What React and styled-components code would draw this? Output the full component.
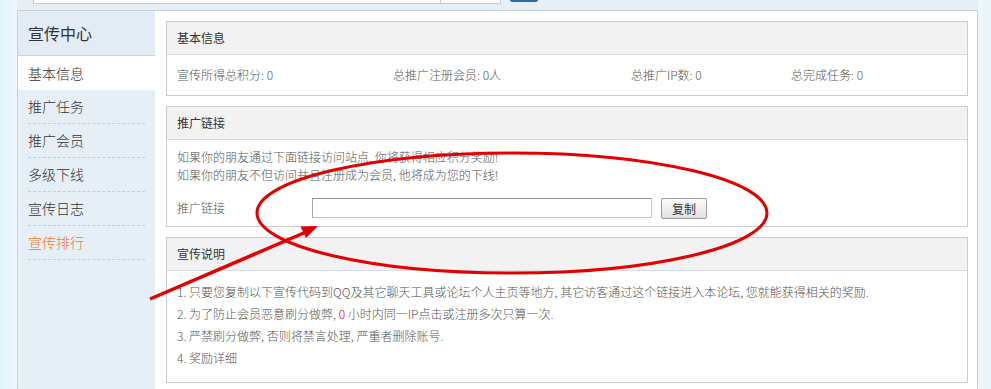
import styled, { createGlobalStyle } from "styled-components";

const GlobalStyle = createGlobalStyle`
  body {
    margin: 0;
    background: #e6f4fa;
    font-family: "Noto Sans CJK SC", "Noto Sans", sans-serif;
  }
`;

const Page = styled.div`
  position: relative;
  width: 991px;
  height: 389px;
  overflow: hidden;
  background: linear-gradient(90deg, #dff3fb 0px, #eef7fb 17px, #eef7fb 977px, #eaf5fa 991px);
  padding-left: 17px;
  box-sizing: border-box;
`;

const Frame = styled.div`
  width: 961px;
  height: 100%;
  background: #e7eef4;
  display: flex;
  flex-direction: column;
`;

const TopBar = styled.div`
  height: 10px;
  display: flex;
  align-items: flex-start;
  padding-left: 16px;
`;

const SearchBox = styled.div`
  width: 406px;
  height: 3px;
  background: #fff;
  border: 1px solid #c5ccd3;
  border-top: none;
`;

const SelectBox = styled.div`
  width: 59px;
  height: 3px;
  background: #fff;
  border: 1px solid #c5ccd3;
  border-top: none;
  border-left: none;
`;

const SearchButton = styled.div`
  width: 28px;
  height: 2px;
  margin-left: 9px;
  background: #2b6aa8;
  border-radius: 0 0 3px 3px;
`;

const Main = styled.div`
  flex: 1;
  display: flex;
  background: #fff;
  border: 1px solid #c8d0d8;
  border-bottom: none;
`;

const Sidebar = styled.div`
  width: 137px;
  background: #e6eef6;
  display: flex;
  flex-direction: column;
`;

const SideTitle = styled.div`
  height: 44px;
  line-height: 44px;
  padding-left: 10px;
  font-size: 16px;
  font-weight: 400;
  color: #333;
  background: #e3ebf4;
  border-bottom: 1px solid #cbd4dd;
`;

const NavItem = styled.div`
  height: ${(p) => (p.$active ? "34px" : "33px")};
  line-height: ${(p) => (p.$active ? "34px" : "33px")};
  margin: ${(p) => (p.$active ? "0" : "0 10px")};
  padding-left: ${(p) => (p.$active ? "10px" : "0")};
  background: ${(p) => (p.$active ? "#fff" : "transparent")};
  border-bottom: ${(p) => (p.$active ? "none" : "1px dashed #c4cdd6")};
  font-size: 14px;
  font-weight: 300;
  color: ${(p) => (p.$hot ? "#ec7a2c" : "#333")};
`;

const Content = styled.div`
  flex: 1;
  padding: 10px 9px 0 11px;
  display: flex;
  flex-direction: column;
  gap: 10px;
`;

const Panel = styled.div`
  border: 1px solid #ccc;
  font-size: 12px;
  font-weight: 300;
  color: #555;
`;

const PanelHead = styled.div`
  height: 32px;
  line-height: 32px;
  padding-left: 10px;
  background: #f2f2f2;
  color: #333;
  font-weight: 400;
  border-bottom: 1px solid #d5dce3;
`;

const Stats = styled.div`
  display: grid;
  grid-template-columns: 216px 238px 160px 1fr;
  height: 40px;
  line-height: 40px;
  padding-left: 10px;
`;

const Body = styled.div`
  padding: ${(p) => p.$pad || "8px 10px 7px"};
  line-height: ${(p) => p.$lh || "18px"};
`;

const LinkRow = styled.div`
  display: flex;
  align-items: center;
  margin-top: 13px;
  height: 22px;
`;

const Label = styled.span`
  width: 135px;
`;

const LinkInput = styled.input`
  width: 336px;
  height: 18px;
  padding: 0 1px;
  border: 1px solid #c8c8c8;
  border-top-color: #8f8f8f;
  border-left-color: #a5a5a5;
  outline: none;
`;

const CopyButton = styled.button`
  margin-left: 9px;
  width: 46px;
  height: 21px;
  padding: 0;
  font-family: inherit;
  font-size: 12px;
  color: #333;
  background: linear-gradient(#fafafa, #e2e2e2);
  border: 1px solid #9c9c9c;
  border-radius: 2px;
`;

const Red = styled.span`
  color: #d40000;
`;

const Overlay = styled.svg`
  position: absolute;
  left: 0;
  top: 0;
  pointer-events: none;
`;

const navs = ["推广任务", "推广会员", "多级下线", "宣传日志"];

export default function App() {
  return (
    <Page>
      <GlobalStyle />
      <Frame>
        <TopBar>
          <SearchBox />
          <SelectBox />
          <SearchButton />
        </TopBar>
        <Main>
          <Sidebar>
            <SideTitle>宣传中心</SideTitle>
            <NavItem $active>基本信息</NavItem>
            {navs.map((n) => (
              <NavItem key={n}>{n}</NavItem>
            ))}
            <NavItem $hot>宣传排行</NavItem>
          </Sidebar>
          <Content>
            <Panel>
              <PanelHead>基本信息</PanelHead>
              <Stats>
                <span>宣传所得总积分: 0</span>
                <span>总推广注册会员: 0人</span>
                <span>总推广IP数: 0</span>
                <span>总完成任务: 0</span>
              </Stats>
            </Panel>
            <Panel>
              <PanelHead>推广链接</PanelHead>
              <Body>
                <div>如果你的朋友通过下面链接访问站点, 你将获得相应积分奖励!</div>
                <div>如果你的朋友不但访问并且注册成为会员, 他将成为您的下线!</div>
                <LinkRow>
                  <Label>推广链接</Label>
                  <LinkInput readOnly value="" />
                  <CopyButton>复制</CopyButton>
                </LinkRow>
              </Body>
            </Panel>
            <Panel>
              <PanelHead>宣传说明</PanelHead>
              <Body $pad="10px 10px 13px" $lh="22px">
                <div>1. 只要您复制以下宣传代码到QQ及其它聊天工具或论坛个人主页等地方, 其它访客通过这个链接进入本论坛, 您就能获得相关的奖励.</div>
                <div>2. 为了防止会员恶意刷分做弊, <Red>0</Red> 小时内同一IP点击或注册多次只算一次.</div>
                <div>3. 严禁刷分做弊, 否则将禁言处理, 严重者删除账号.</div>
                <div>4. 奖励详细</div>
              </Body>
            </Panel>
          </Content>
        </Main>
      </Frame>
      <Overlay width="991" height="389" viewBox="0 0 991 389">
        <ellipse cx="512" cy="213" rx="255" ry="60" fill="none" stroke="#e40000" strokeWidth="3" />
        <line x1="150" y1="299" x2="306" y2="232" stroke="#e40000" strokeWidth="3.5" />
        <polygon points="318,226 300.5,226.5 306,238" fill="#e40000" />
      </Overlay>
    </Page>
  );
}
